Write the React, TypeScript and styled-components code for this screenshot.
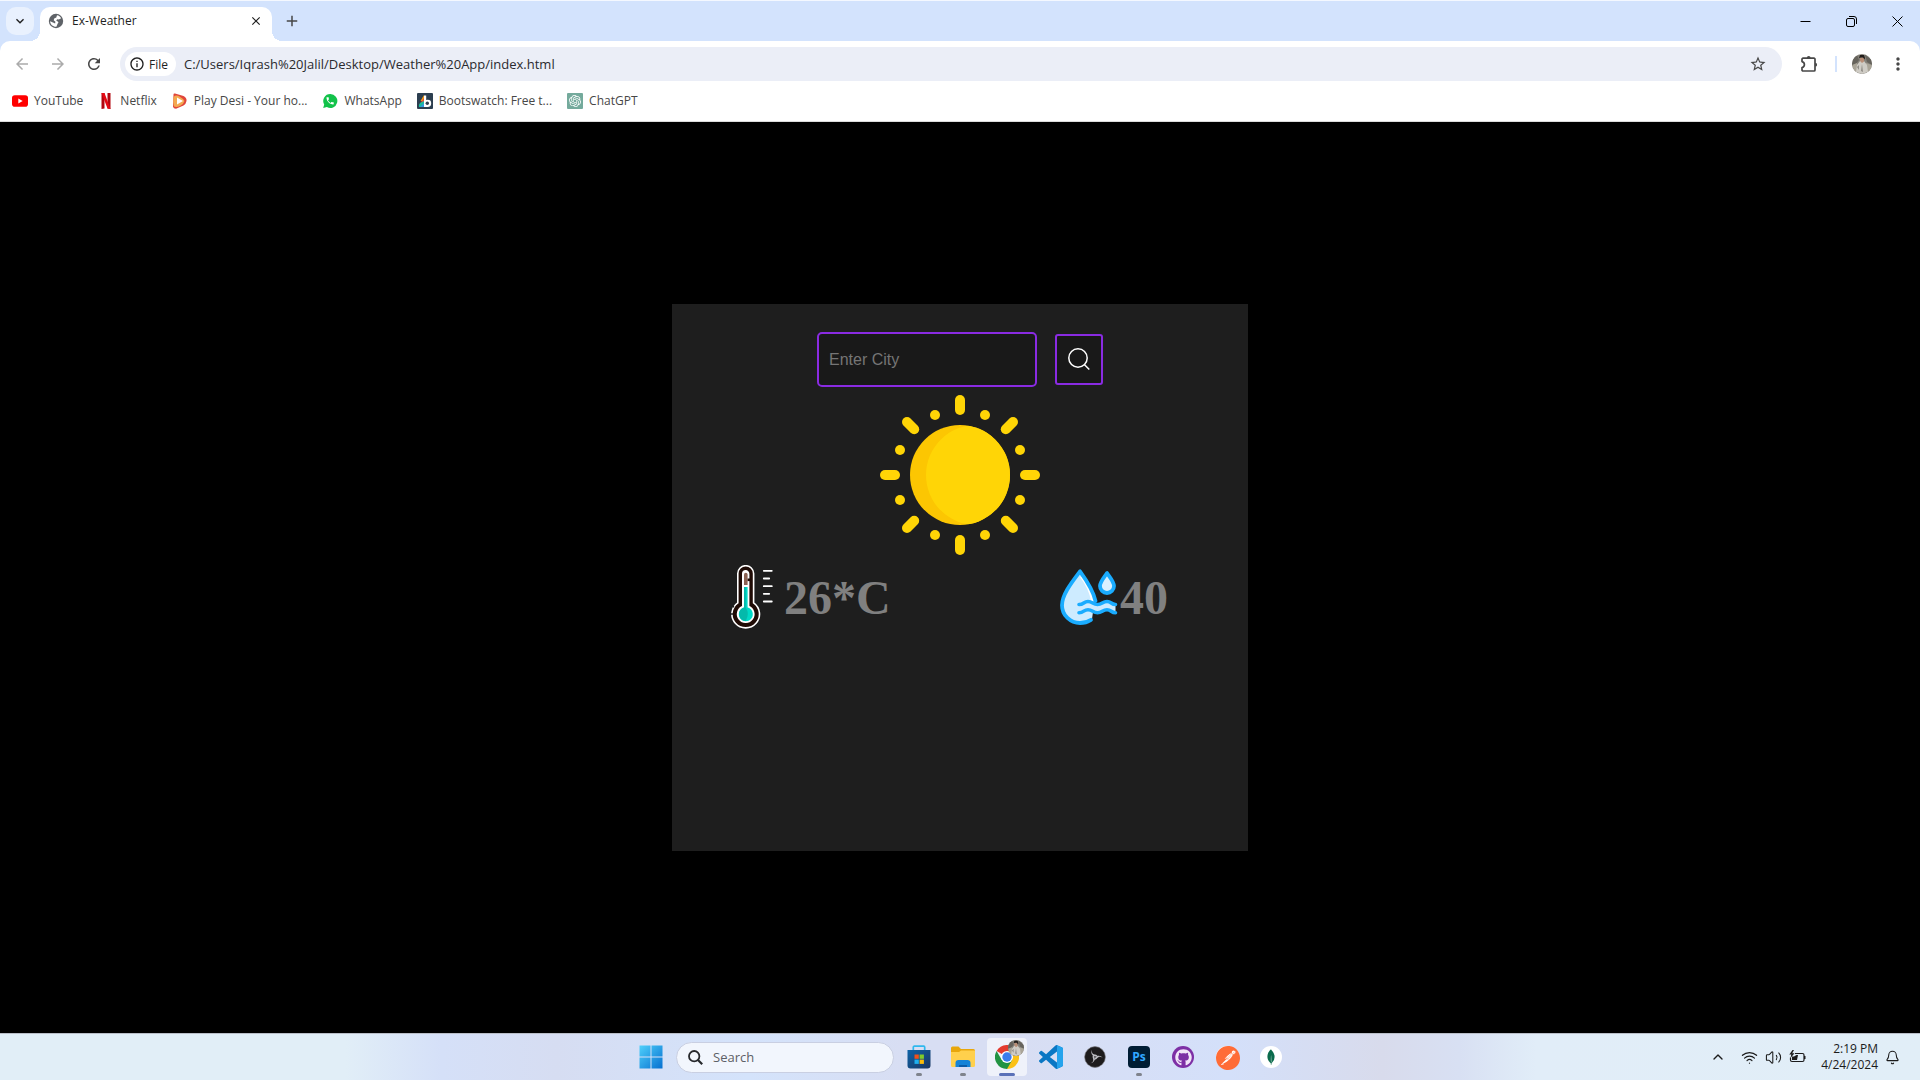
import React from "react";
import styled, { createGlobalStyle, css } from "styled-components";
import {
  MdAdd,
  MdArrowBack,
  MdArrowForward,
  MdClose,
  MdExpandMore,
  MdMoreVert,
  MdOutlineInfo,
  MdRefresh,
  MdStarBorder,
} from "react-icons/md";
import { FaGithub } from "react-icons/fa";
import { SiMongodb, SiOpenai, SiPostman } from "react-icons/si";
import { Bell, ChevronUp, Volume2, Wifi } from "lucide-react";

const uiFont = `"Open Sans", "Noto Sans", sans-serif`;

const GlobalStyle = createGlobalStyle`
  * { box-sizing: border-box; }
  body { margin: 0; background: #000; font-family: ${uiFont}; }
  button { font: inherit; color: inherit; border: 0; padding: 0; background: none; cursor: pointer; }
  input { font: inherit; }
  svg { display: block; flex: none; }
`;

const Screen = styled.div`
  min-height: 100vh;
  display: flex;
  flex-direction: column;
`;

/* ---------- Browser chrome ---------- */

const BrowserHeader = styled.header`
  background: #d3e3fd;
  border-top: 1px solid #f4f8ff;
`;

const TabStrip = styled.div`
  display: flex;
  align-items: flex-end;
  height: 40px;
  padding-left: 6px;
`;

const TabSearch = styled.button`
  display: grid;
  place-items: center;
  width: 28px;
  height: 28px;
  margin: 0 6px 6px 0;
  border-radius: 10px;
  background: #e9f1fe;
  color: #1f1f1f;
`;

const Tab = styled.div`
  position: relative;
  display: flex;
  align-items: center;
  width: 232px;
  height: 34px;
  padding: 0 8px 6px;
  border-radius: 10px 10px 0 0;
  background: #fff;
  color: #1f1f1f;
  font-size: 12px;

  &::before,
  &::after {
    content: "";
    position: absolute;
    bottom: 0;
    width: 10px;
    height: 10px;
  }
  &::before {
    right: 100%;
    background: radial-gradient(circle at 0 0, transparent 10px, #fff 10px);
  }
  &::after {
    left: 100%;
    background: radial-gradient(circle at 100% 0, transparent 10px, #fff 10px);
  }
`;

const TabTitle = styled.span`
  flex: 1;
  padding-left: 8px;
  line-height: 16px;
`;

const SmallButton = styled.button`
  display: grid;
  place-items: center;
  width: 16px;
  height: 16px;
`;

const NewTab = styled.button`
  display: grid;
  place-items: center;
  width: 28px;
  height: 28px;
  margin: 0 0 6px 6px;
  color: #474747;
`;

const WindowControls = styled.div`
  display: flex;
  align-self: stretch;
  margin-left: auto;
`;

const WindowButton = styled.button`
  display: grid;
  place-items: center;
  width: 46px;
  height: 40px;
`;

const Toolbar = styled.div`
  display: flex;
  align-items: center;
  height: 46px;
  padding: 0 4px;
  border-radius: 10px 10px 0 0;
  background: #fff;
`;

const ToolButton = styled.button<{ $muted?: boolean }>`
  display: grid;
  place-items: center;
  width: 36px;
  height: 34px;
  color: ${(p) => (p.$muted ? "#ababab" : "#474747")};
`;

const Omnibox = styled.div`
  flex: 1;
  display: flex;
  align-items: center;
  height: 34px;
  margin: 0 9px 0 8px;
  padding: 0 6px 0 5px;
  border-radius: 17px;
  background: #ebeef7;
`;

const SiteChip = styled.button`
  display: flex;
  align-items: center;
  gap: 4px;
  height: 24px;
  padding: 0 8px 0 4px;
  border-radius: 12px;
  background: #fff;
  color: #1f1f1f;
  font-size: 12px;
`;

const Address = styled.input`
  flex: 1;
  min-width: 0;
  margin-left: 8px;
  padding: 0;
  border: 0;
  outline: 0;
  background: none;
  color: #2a2a2e;
  font-size: 13px;
`;

const ToolDivider = styled.span`
  width: 2px;
  height: 16px;
  margin: 0 7px 0 8px;
  background: #d3e3fd;
`;

const Bookmarks = styled.nav`
  display: flex;
  align-items: center;
  gap: 15px;
  height: 35px;
  padding: 0 12px 6px;
  background: #fff;
  border-bottom: 1px solid #dcdcdc;
`;

const Bookmark = styled.a`
  display: flex;
  align-items: center;
  gap: 6px;
  color: #474747;
  font-size: 12px;
  line-height: 16px;
  text-decoration: none;
  white-space: nowrap;
`;

/* ---------- Weather page ---------- */

const Page = styled.main`
  flex: 1;
  display: grid;
  grid-template-rows: 1fr 3fr 1fr;
  grid-template-columns: 35fr 30fr 35fr;
  background: #000;
`;

const Card = styled.section`
  grid-area: 2 / 2;
  display: flex;
  flex-direction: column;
  align-items: center;
  padding-top: 28px;
  background: #1e1e1e;
`;

const SearchForm = styled.form`
  display: flex;
  align-items: center;
  gap: 18px;
  margin-bottom: 8px;
`;

const outlined = css`
  border: 2px solid #8a2be2;
  background: #191919;
`;

const CityInput = styled.input`
  ${outlined}
  width: 220px;
  height: 55px;
  padding: 0 10px;
  border-radius: 5px;
  outline: 0;
  color: #fff;
  font-family: "Liberation Sans", Arial, sans-serif;
  font-size: 16px;

  &::placeholder {
    color: #757575;
    opacity: 1;
  }
`;

const SearchButton = styled.button`
  ${outlined}
  display: grid;
  place-items: center;
  width: 48px;
  height: 51px;
  border-radius: 3px;
`;

const Readings = styled.div`
  align-self: stretch;
  display: flex;
  justify-content: space-between;
  margin-top: 10px;
  padding: 0 80px 0 48px;
`;

const Reading = styled.div`
  display: flex;
  align-items: center;
`;

const ReadingValue = styled.h1`
  margin: 0;
  color: #808080;
  font: bold 48px "Liberation Serif", "Times New Roman", serif;
`;

/* ---------- Taskbar ---------- */

const Taskbar = styled.footer`
  display: grid;
  grid-template-columns: 1fr auto 1fr;
  align-items: center;
  height: 47px;
  padding-left: 2px;
  border-top: 1px solid #b9bec8;
  background: linear-gradient(
    90deg,
    #e1eef7 0%,
    #e1eef7 18%,
    #d5e0f8 23%,
    #d6ddf2 29%,
    #d4e3fb 39%,
    #d8def3 47%,
    #d8def3 53%,
    #d4e0fa 64%,
    #d8dbec 72%,
    #d8e0f3 76%,
    #e1edf8 80%,
    #e1eef7 100%
  );
`;

const Apps = styled.div`
  grid-column: 2;
  display: flex;
  align-items: center;
  gap: 4px;
`;

const AppButton = styled.button<{ $active?: boolean; $mark?: string; $markWidth?: number }>`
  position: relative;
  display: grid;
  place-items: center;
  width: 40px;
  height: 38px;
  border-radius: 4px;
  background: ${(p) => (p.$active ? "rgba(255, 255, 255, 0.6)" : "none")};

  &::after {
    content: "";
    display: ${(p) => (p.$mark ? "block" : "none")};
    position: absolute;
    bottom: 0;
    left: 50%;
    width: ${(p) => p.$markWidth ?? 6}px;
    height: 3px;
    border-radius: 2px;
    background: ${(p) => p.$mark};
    transform: translateX(-50%);
  }
`;

const ProfileBadge = styled.span`
  position: absolute;
  top: 2px;
  right: 3px;
`;

const TaskSearch = styled.label`
  display: flex;
  align-items: center;
  gap: 10px;
  width: 218px;
  height: 31px;
  margin: 0 1px;
  padding: 0 11px;
  border: 1px solid #c9cfe2;
  border-radius: 16px;
  background: #f2f6fd;
`;

const TaskSearchInput = styled.input`
  flex: 1;
  min-width: 0;
  padding: 0;
  border: 0;
  outline: 0;
  background: none;
  font-size: 13px;

  &::placeholder {
    color: #5d6066;
    opacity: 1;
  }
`;

const Disc = styled.span<{ $bg: string; $fg: string }>`
  display: grid;
  place-items: center;
  width: 22px;
  height: 22px;
  border-radius: 50%;
  background: ${(p) => p.$bg};
  color: ${(p) => p.$fg};
`;

const PhotoshopTile = styled.span`
  display: grid;
  place-items: center;
  width: 22px;
  height: 22px;
  border-radius: 4px;
  background: #001d34;
  color: #31a8ff;
  font-size: 12px;
  font-weight: 700;
  line-height: 20px;
`;

const GptTile = styled.span`
  display: grid;
  place-items: center;
  width: 16px;
  height: 16px;
  border-radius: 1px;
  background: #74aa9c;
  color: #fff;
`;

const Tray = styled.div`
  grid-column: 3;
  justify-self: end;
  display: flex;
  align-items: center;
  gap: 7px;
  padding-right: 20px;
  color: #1b1b1b;
`;

const TrayChevron = styled.button`
  margin-right: 8px;
`;

const Clock = styled.time`
  margin-left: 8px;
  font-size: 12px;
  line-height: 16px;
  text-align: right;
`;

/* ---------- Drawings ---------- */

const GlobeIcon = () => (
  <svg width="16" height="16" viewBox="0 0 16 16">
    <circle cx="8" cy="8" r="7.2" fill="#5f6368" />
    <path
      d="M9 2.2c1.8.3 3.4 1.4 4.2 3L10.8 6.5 9.3 6.2 8.2 7.6 9.7 8.500c1 .4.8 1.5 0 2.1L8.4 13.8C5 14 2.300 11.6 2.100 8.300L5 9.4l2.100 1.100.3-1.700L5.700 7.300l.5-1.900L8.300 4.600z"
      fill="#fff"
    />
  </svg>
);

const PuzzleIcon = () => (
  <svg width="18" height="18" viewBox="0 0 18 18">
    <path
      d="M3 3.2H14a1 1 0 0 1 1 1V15a1 1 0 0 1-1 1H3a1 1 0 0 1-1-1V12.6c3.2-.6 3.2-5.4 0-6V4.2a1 1 0 0 1 1-1z"
      fill="none"
      stroke="#474747"
      strokeWidth="1.7"
      strokeLinejoin="round"
    />
    <path d="M6.8 3a1.9 1.9 0 0 1 3.8 0zM15.2 7.8a1.9 1.9 0 0 1 0 3.8z" fill="#474747" />
  </svg>
);

const Portrait = ({ size }: { size: number }) => (
  <svg width={size} height={size} viewBox="0 0 20 20">
    <clipPath id={`portrait-${size}`}>
      <circle cx="10" cy="10" r="10" />
    </clipPath>
    <g clipPath={`url(#portrait-${size})`}>
      <rect width="20" height="20" fill="#85827a" />
      <path d="M0 4l5-3 2 5-3 4-4 2zM13 1l7 5v5l-5-3z" fill="#66635c" />
      <path d="M0 11l5-2 1 8-3 2zM14 9l6 2-2 7-4-1z" fill="#aaa598" />
      <path d="M5 11l3-4h4l3 4 1 7-6 2-6-2z" fill="#cfccc5" />
      <path d="M8 3.5h4v4L10 9 8 7z" fill="#b98e76" />
      <path d="M7 4l1-3h4l1 3-.5 1.5L11 3.5H9z" fill="#211d1b" />
      <path d="M5 13l2-2v5zM10 10l1 8-2-1z" fill="#8f8c86" />
    </g>
  </svg>
);

const YouTubeIcon = () => (
  <svg width="16" height="16" viewBox="0 0 16 16">
    <rect y="2.3" width="16" height="11.4" rx="2.8" fill="#f00" />
    <path d="M6.3 5.5v5L10.7 8z" fill="#fff" />
  </svg>
);

const NetflixIcon = () => (
  <svg width="16" height="16" viewBox="0 0 16 16">
    <path d="M3.5 0h3v15.5l-3 .5zM9.5 0h3v16l-3-.5z" fill="#b1060f" />
    <path d="M3.5 0h3l6 16-3-.5z" fill="#e50914" />
  </svg>
);

const PlayDesiIcon = () => (
  <svg width="16" height="16" viewBox="0 0 16 16">
    <path d="M1.5 1.500Q1.500.3 3 .6L11.500 3q3.500 2 3 5t-3 4.500L4 15.700q-2.500 0-3-2z" fill="#e0453a" />
    <path d="M1.500 4q2.500-2.500 6-.5t5 4.500q-1 3.500-4.500 5t-6 .5Q.500 8.500 1.500 4z" fill="#f3a950" />
    <path d="M5 4.500v7L11 8z" fill="#fff" />
  </svg>
);

const WhatsAppIcon = () => (
  <svg width="16" height="16" viewBox="0 0 16 16">
    <path d="M8.300 1a7 7 0 1 1-3.400 13.100L1.200 15l1-3.500A7 7 0 0 1 8.300 1z" fill="#12c24a" />
    <path
      transform="translate(3.300 3) scale(.4)"
      d="M6.620 10.790c1.440 2.830 3.760 5.140 6.590 6.590l2.200-2.200c.27-.27.67-.36 1.020-.24 1.120.37 2.330.57 3.570.57.55 0 1 .45 1 1V20c0 .55-.45 1-1 1-9.390 0-17-7.610-17-17 0-.55.45-1 1-1h3.500c.55 0 1 .45 1 1 0 1.250.2 2.450.57 3.570.11.35.03.74-.25 1.020l-2.200 2.200z"
      fill="#fff"
    />
  </svg>
);

const BootswatchIcon = () => (
  <svg width="16" height="16" viewBox="0 0 16 16">
    <rect width="16" height="16" rx="1" fill="#2c3e50" />
    <path d="M7 2v6H3.5z" fill="#f39c12" />
    <path d="M7 5V10L2 12z" fill="#e74c3c" />
    <path d="M7 8v6H2q-.8-2 1-4z" fill="#18bc9c" />
    <path d="M7 10v4H3z" fill="#3498db" />
    <path d="M7 2.5h2.2V7q5-.8 5 3.3T10 14H7z" fill="#fff" />
    <circle cx="10.3" cy="10.3" r="1.7" fill="#2c3e50" />
  </svg>
);

const MagnifierIcon = () => (
  <svg width="24" height="24" viewBox="0 0 24 24" fill="none" stroke="#fff" strokeWidth="1.5">
    <circle cx="11" cy="10" r="9.2" />
    <path d="M17.3 16.500l5 5" />
  </svg>
);

const SunIcon = () => (
  <svg width="160" height="160" viewBox="0 0 160 160" role="img" aria-label="Sunny">
    <clipPath id="sun-disc">
      <circle cx="80" cy="80" r="50" />
    </clipPath>
    <circle cx="80" cy="80" r="50" fill="#fcc602" />
    <circle cx="96" cy="80" r="50" fill="#ffd506" clipPath="url(#sun-disc)" />
    {[0, 90, 180, 270].map((angle) => (
      <g key={angle} transform={`rotate(${angle} 80 80)`} fill="#ffd506">
        <rect x="75" width="10" height="20" rx="5" />
        <circle cx="55" cy="20" r="5" />
        <circle cx="105" cy="20" r="5" />
        <path d="M27 27l7.2 7.2" stroke="#ffd506" strokeWidth="10" strokeLinecap="round" />
      </g>
    ))}
  </svg>
);

const ThermometerIcon = () => (
  <svg width="64" height="64" viewBox="0 0 64 64" role="img" aria-label="Temperature">
    <path
      d="M17.8 8.6a7.9 7.9 0 0 1 15.8 0V37.8a13.8 13.8 0 1 1-15.8 0z"
      fill="#1f0b05"
      stroke="#fff"
      strokeWidth="1.6"
    />
    <path d="M22.7 8.8a3 3 0 0 1 6 0V41.5a8.2 8.2 0 1 1-6 0z" fill="#fff" stroke="#fff" strokeWidth="1.4" />
    <path d="M24 9.5a1.7 1.7 0 0 1 3.6 0V20H24z" fill="#8b6253" />
    <path d="M24 22h3.6v20.5a7 7 0 1 1-3.6 0z" fill="#00d9c7" />
    <path d="M24 22h1.8V42.6q4 6 0 13.5A7 7 0 0 1 24 42.5z" fill="#04b9ab" />
    <path d="M27.6 13.5h3v2.6h-3z" fill="#1f0b05" />
    <path d="M10 49h3M14 42l-2-1" stroke="#1e1e1e" strokeWidth="1.6" />
    <path
      d="M43.8 5.8h8M43.8 13.5h5.4M43.8 21.2h8M43.8 28.8h5.4M43.8 36.5h8"
      stroke="#fff"
      strokeWidth="1.8"
      strokeLinecap="round"
    />
  </svg>
);

const HumidityIcon = () => (
  <svg width="64" height="64" viewBox="0 0 64 64" role="img" aria-label="Humidity" fill="none">
    <path d="M24 6C17 15.5 6 29 6 40.5A18 18 0 0 0 24 58q7 0 12-4l2-14Q37 27 24 6z" fill="#cdebff" />
    <path d="M26 11q10 13.500 13 26l-4-1Q33 24 24 12z" fill="#fff" />
    <path
      d="M39.500 36C37.500 26.500 31 16 24 6.300 16 17 6 29.500 6 40.200 6 50.500 14.500 58 24 58q6 0 11-3.200"
      stroke="#1aacff"
      strokeWidth="3.8"
      strokeLinecap="round"
      strokeLinejoin="round"
    />
    <path
      d="M51 8c-2.600 4-7 8.500-7 13a7 7 0 0 0 14 0c0-4.500-4.400-9-7-13z"
      fill="#d9f0ff"
      stroke="#1aacff"
      strokeWidth="3.8"
      strokeLinejoin="round"
    />
    <path
      d="M23 39.500c5 0 4.500-3 9-3s5 3 9.500 3 5-3 9.500-3 4 3 8.500 3v8.200c-5 0-4-3-8.500-3s-5 3-9.500 3-5-3-9.500-3-4 3-9 3z"
      fill="#cdebff"
    />
    {[39.5, 47.7].map((y) => (
      <path
        key={y}
        d={`M23 ${y}c5 0 4.500-3 9-3s5 3 9.500 3 5-3 9.500-3 4 3 8.500 3`}
        stroke="#1aacff"
        strokeWidth="3.6"
        strokeLinecap="round"
      />
    ))}
  </svg>
);

const WindowsIcon = () => (
  <svg width="24" height="24" viewBox="0 0 24 24">
    <linearGradient id="win" x1="0" y1="0" x2="1" y2="1">
      <stop offset="0" stopColor="#4fd0fb" />
      <stop offset="1" stopColor="#0670d0" />
    </linearGradient>
    <path d="M.5 .5h11v11H.5zM12.500 .5h11v11h-11zM.5 12.500h11v11H.5zM12.500 12.500h11v11h-11z" fill="url(#win)" />
  </svg>
);

const StoreIcon = () => (
  <svg width="24" height="24" viewBox="0 0 24 24">
    <linearGradient id="store" x1="0" y1="0" x2="1" y2="1">
      <stop offset="0" stopColor="#0d63a8" />
      <stop offset="1" stopColor="#1b3661" />
    </linearGradient>
    <path d="M6.3 6V2.2a1 1 0 0 1 1-1h9.4a1 1 0 0 1 1 1V6" fill="none" stroke="#2fb8ee" strokeWidth="1.7" />
    <path d="M.5 5h23v15.5a3 3 0 0 1-3 3h-17a3 3 0 0 1-3-3z" fill="url(#store)" />
    <path d="M7.5 9.5h4.3v4.3H7.5z" fill="#f1511b" />
    <path d="M12.600 9.500h4.300v4.300h-4.300z" fill="#80cc28" />
    <path d="M7.5 14.600h4.300v4.300H7.500z" fill="#1fb0ee" />
    <path d="M12.600 14.600h4.300v4.300h-4.300z" fill="#fbbc09" />
  </svg>
);

const FolderIcon = () => (
  <svg width="24" height="24" viewBox="0 0 24 24">
    <path d="M0 3a1.5 1.5 0 0 1 1.5-1.5h6L10 4h12.5A1.5 1.5 0 0 1 24 5.5V12H0z" fill="#e8a70c" />
    <path d="M0 7h8l2-1.5h14V20.5a1.5 1.5 0 0 1-1.5 1.5h-21A1.5 1.5 0 0 1 0 20.5z" fill="#ffd04c" />
    <path d="M4.5 22v-4a3 3 0 0 1 3-3h9a3 3 0 0 1 3 3v4z" fill="#1583d7" />
    <path d="M8 22v-2h8v2z" fill="#0b5ca8" />
  </svg>
);

const ChromeIcon = () => (
  <svg width="24" height="24" viewBox="0 0 24 24">
    <path d="M12 12L1.600 6a12 12 0 0 1 20.800 0z" fill="#e33b2e" />
    <path d="M12 12V6h10.400A12 12 0 0 1 12 24z" fill="#fbc116" />
    <path d="M12 12l5.200 3L12 24A12 12 0 0 1 1.600 6l5.200 9z" fill="#229342" />
    <circle cx="12" cy="12" r="6" fill="#fff" />
    <circle cx="12" cy="12" r="4.7" fill="#3b7ded" />
  </svg>
);

const CodeIcon = () => (
  <svg width="24" height="24" viewBox="0 0 24 24">
    <path
      d="M23.15 2.587L18.21.21a1.494 1.494 0 0 0-1.705.29l-9.46 8.63-4.12-3.128a.999.999 0 0 0-1.276.057L.327 7.261A1 1 0 0 0 .326 8.74L3.899 12 .326 15.26a1 1 0 0 0 .001 1.479L1.65 17.94a.999.999 0 0 0 1.276.057l4.12-3.128 9.46 8.63a1.492 1.492 0 0 0 1.704.29l4.942-2.377A1.5 1.5 0 0 0 24 20.06V3.939a1.5 1.5 0 0 0-.85-1.352zm-5.146 14.861L10.826 12l7.178-5.448v10.896z"
      fill="#0a77c4"
    />
    <path d="M18 .2l5.200 2.400a1.500 1.500 0 0 1 .8 1.300v16.200a1.500 1.500 0 0 1-.8 1.300L18 23.800z" fill="#25a3ec" />
  </svg>
);

const ObsIcon = () => (
  <svg width="22" height="22" viewBox="0 0 22 22">
    <circle cx="11" cy="11" r="10.400" fill="#1d1b1c" stroke="#77777c" strokeWidth=".6" />
    {[0, 120, 240].map((angle) => (
      <path
        key={angle}
        transform={`rotate(${angle} 11 11)`}
        d="M11.500 10.500C8 10 6.500 7 7.800 4c-.4 2.600 1 4.500 3.200 4.600 1.800.2 3 1.500 3.200 3.200-.6-.9-1.600-1.300-2.700-1.300z"
        fill="#bdbdc2"
      />
    ))}
  </svg>
);

const BatteryIcon = () => (
  <svg width="17" height="14" viewBox="0 0 17 14">
    <path
      d="M6 3.500h7.500a1.500 1.500 0 0 1 1.500 1.500v5a1.500 1.500 0 0 1-1.500 1.500H3A1.500 1.500 0 0 1 1.500 10V7.500"
      fill="none"
      stroke="#1b1b1b"
      strokeWidth="1.2"
    />
    <path d="M3 6.500h2L7.500 5H9l-1 5H3zM15 6h1.500v3H15z" fill="#1b1b1b" />
    <path d="M3.500 0L.3 4.500h2L1.500 8l4-4.800H3.200L5 0z" fill="#1b1b1b" />
  </svg>
);

const bookmarks = [
  { label: "YouTube", icon: <YouTubeIcon /> },
  { label: "Netflix", icon: <NetflixIcon /> },
  { label: "Play Desi - Your ho...", icon: <PlayDesiIcon /> },
  { label: "WhatsApp", icon: <WhatsAppIcon /> },
  { label: "Bootswatch: Free t...", icon: <BootswatchIcon /> },
  {
    label: "ChatGPT",
    icon: (
      <GptTile>
        <SiOpenai size={12} />
      </GptTile>
    ),
  },
];

export default function App() {
  return (
    <Screen>
      <GlobalStyle />
      <BrowserHeader>
        <TabStrip>
          <TabSearch aria-label="Search tabs">
            <MdExpandMore size={16} />
          </TabSearch>
          <Tab>
            <GlobeIcon />
            <TabTitle>Ex-Weather</TabTitle>
            <SmallButton aria-label="Close tab">
              <MdClose size={14} />
            </SmallButton>
          </Tab>
          <NewTab aria-label="New tab">
            <MdAdd size={18} />
          </NewTab>
          <WindowControls>
            <WindowButton aria-label="Minimize">
              <svg width="11" height="11" viewBox="0 0 11 11" stroke="#000">
                <path d="M.5 5.5h10" />
              </svg>
            </WindowButton>
            <WindowButton aria-label="Restore">
              <svg width="11" height="11" viewBox="0 0 11 11" fill="none" stroke="#000">
                <rect x=".5" y="2.5" width="8" height="8" rx="1.5" />
                <path d="M3 .5h5a2.500 2.500 0 0 1 2.500 2.500v5" />
              </svg>
            </WindowButton>
            <WindowButton aria-label="Close">
              <svg width="11" height="11" viewBox="0 0 11 11" stroke="#000">
                <path d="M.5 .5l10 10M10.500 .5l-10 10" />
              </svg>
            </WindowButton>
          </WindowControls>
        </TabStrip>
        <Toolbar>
          <ToolButton $muted aria-label="Back">
            <MdArrowBack size={18} />
          </ToolButton>
          <ToolButton $muted aria-label="Forward">
            <MdArrowForward size={18} />
          </ToolButton>
          <ToolButton aria-label="Reload">
            <MdRefresh size={18} />
          </ToolButton>
          <Omnibox>
            <SiteChip>
              <MdOutlineInfo size={16} />
              File
            </SiteChip>
            <Address
              aria-label="Address"
              readOnly
              value="C:/Users/Iqrash%20Jalil/Desktop/Weather%20App/index.html"
            />
            <ToolButton aria-label="Bookmark this page">
              <MdStarBorder size={18} />
            </ToolButton>
          </Omnibox>
          <ToolButton aria-label="Extensions">
            <PuzzleIcon />
          </ToolButton>
          <ToolDivider />
          <ToolButton aria-label="Profile">
            <Portrait size={20} />
          </ToolButton>
          <ToolButton aria-label="Menu">
            <MdMoreVert size={20} />
          </ToolButton>
        </Toolbar>
        <Bookmarks>
          {bookmarks.map((b) => (
            <Bookmark key={b.label} href="#">
              {b.icon}
              {b.label}
            </Bookmark>
          ))}
        </Bookmarks>
      </BrowserHeader>

      <Page>
        <Card>
          <SearchForm onSubmit={(e: React.FormEvent) => e.preventDefault()}>
            <CityInput aria-label="City" placeholder="Enter City" />
            <SearchButton aria-label="Search">
              <MagnifierIcon />
            </SearchButton>
          </SearchForm>
          <SunIcon />
          <Readings>
            <Reading>
              <ThermometerIcon />
              <ReadingValue>26*C</ReadingValue>
            </Reading>
            <Reading>
              <HumidityIcon />
              <ReadingValue>40</ReadingValue>
            </Reading>
          </Readings>
        </Card>
      </Page>

      <Taskbar>
        <Apps>
          <AppButton aria-label="Start">
            <WindowsIcon />
          </AppButton>
          <TaskSearch>
            <svg width="15" height="15" viewBox="0 0 15 15" fill="none" stroke="#26282c" strokeWidth="1.8">
              <circle cx="6.2" cy="6.2" r="5.2" />
              <path d="M10 10l4.2 4.2" strokeWidth="2.2" />
            </svg>
            <TaskSearchInput aria-label="Search" placeholder="Search" />
          </TaskSearch>
          <AppButton aria-label="Microsoft Store" $mark="#7f838c">
            <StoreIcon />
          </AppButton>
          <AppButton aria-label="File Explorer" $mark="#7f838c">
            <FolderIcon />
          </AppButton>
          <AppButton aria-label="Google Chrome" $active $mark="#5a71b8" $markWidth={16}>
            <ChromeIcon />
            <ProfileBadge>
              <Portrait size={16} />
            </ProfileBadge>
          </AppButton>
          <AppButton aria-label="Visual Studio Code">
            <CodeIcon />
          </AppButton>
          <AppButton aria-label="OBS Studio">
            <ObsIcon />
          </AppButton>
          <AppButton aria-label="Photoshop" $mark="#7f838c">
            <PhotoshopTile>Ps</PhotoshopTile>
          </AppButton>
          <AppButton aria-label="GitHub Desktop">
            <Disc $bg="#7d2fa5" $fg="#f1e4f8">
              <FaGithub size={17} />
            </Disc>
          </AppButton>
          <AppButton aria-label="Postman">
            <Disc $bg="#fff" $fg="#ff6c37">
              <SiPostman size={24} />
            </Disc>
          </AppButton>
          <AppButton aria-label="MongoDB Compass">
            <Disc $bg="#fff" $fg="#0b6b4c">
              <SiMongodb size={16} />
            </Disc>
          </AppButton>
        </Apps>
        <Tray>
          <TrayChevron aria-label="Show hidden icons">
            <ChevronUp size={16} strokeWidth={2} />
          </TrayChevron>
          <Wifi size={17} strokeWidth={1.7} />
          <Volume2 size={17} strokeWidth={1.5} />
          <BatteryIcon />
          <Clock>
            2:19 PM
            <br />
            4/24/2024
          </Clock>
          <Bell size={15} strokeWidth={1.7} />
        </Tray>
      </Taskbar>
    </Screen>
  );
}
